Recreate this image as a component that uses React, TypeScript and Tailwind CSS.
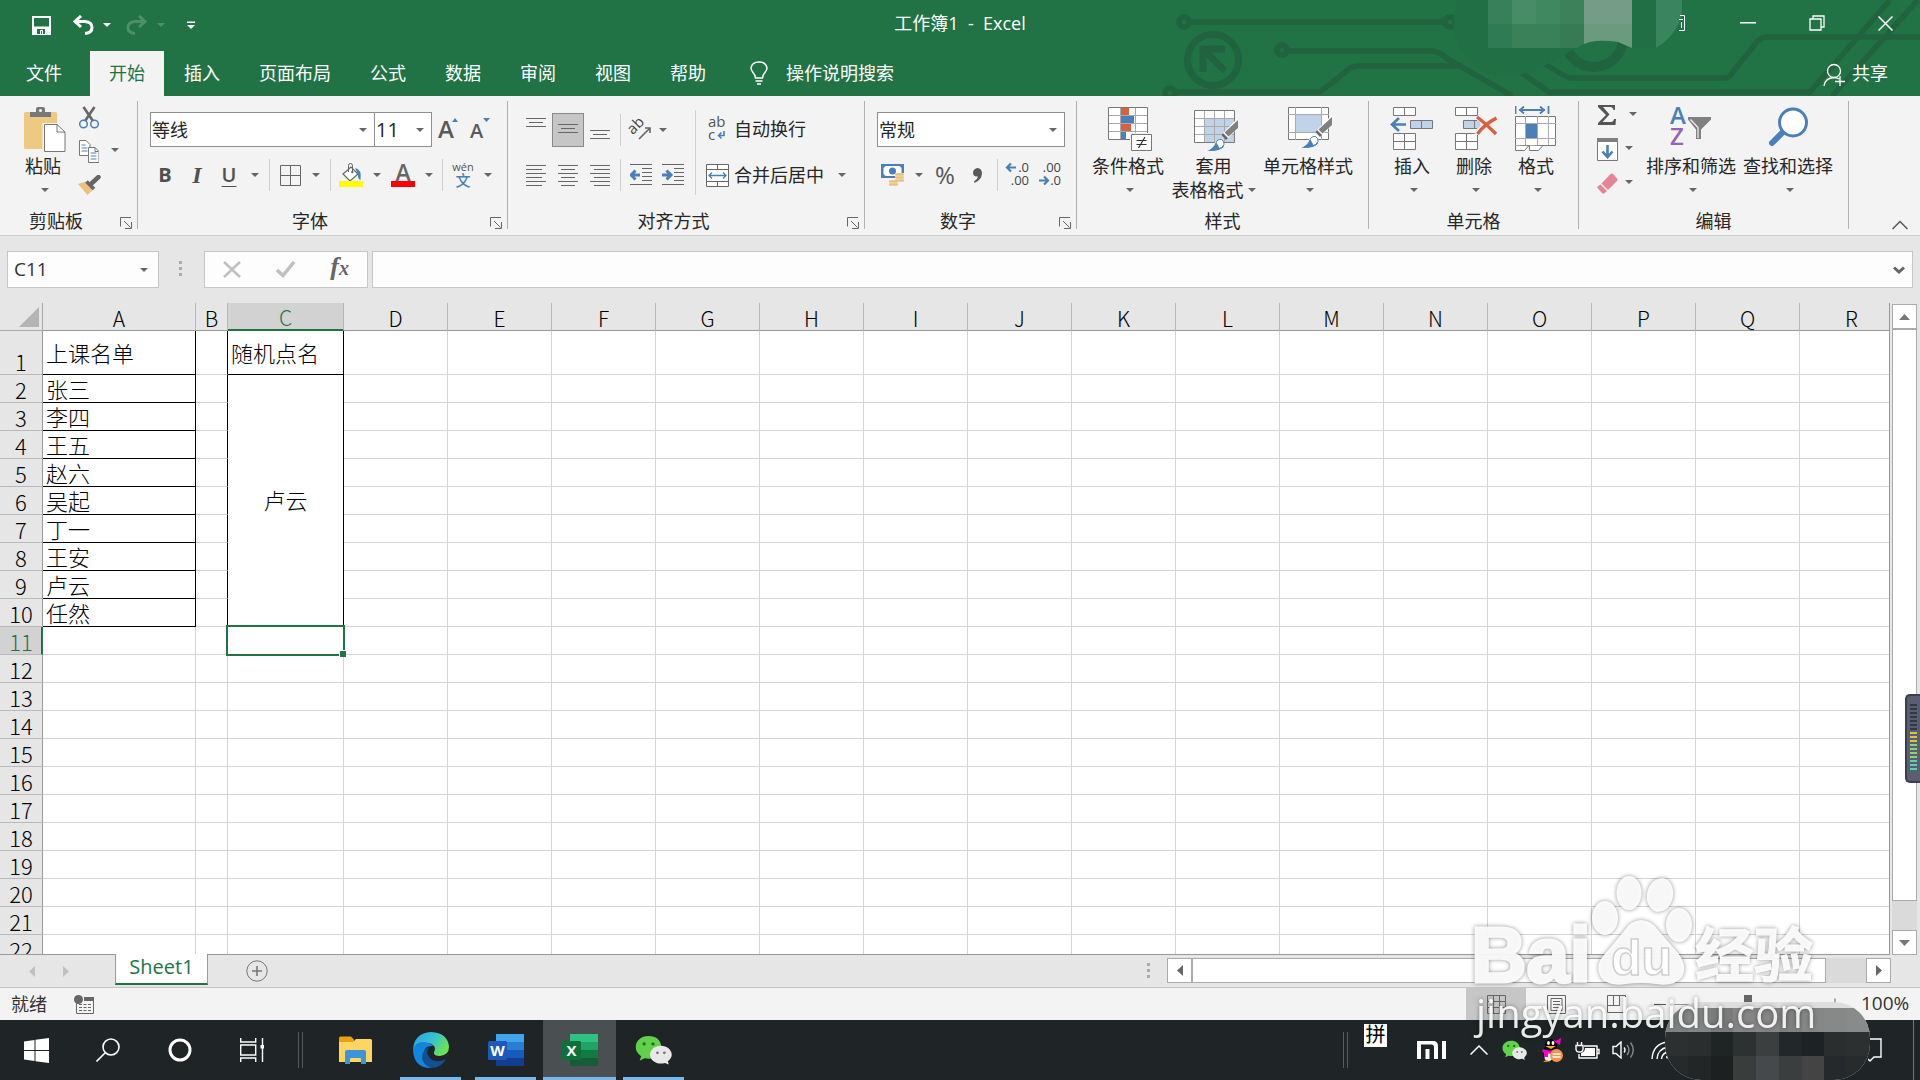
import type { ReactNode } from "react";

const names = ["张三", "李四", "王五", "赵六", "吴起", "丁一", "王安", "卢云", "任然"];
const columns = ["A", "B", "C", "D", "E", "F", "G", "H", "I", "J", "K", "L", "M", "N", "O", "P", "Q", "R"];
const restColumns = columns.slice(3);
const tabs = ["插入", "页面布局", "公式", "数据", "审阅", "视图", "帮助"];

/* ---------- small shared pieces ---------- */

function Caret({ className = "text-[#666]" }: { className?: string }) {
  return (
    <svg width="8" height="4" viewBox="0 0 8 4" className={className} aria-hidden="true">
      <path d="M0 0h8L4 4z" fill="currentColor" />
    </svg>
  );
}

function CaretButton({ label }: { label: string }) {
  return (
    <button aria-label={label} className="flex h-8 w-5 items-center justify-center">
      <Caret />
    </button>
  );
}

function IconButton({ label, active, children }: { label: string; active?: boolean; children: ReactNode }) {
  return (
    <button
      aria-label={label}
      className={
        active
          ? "flex h-[34px] w-8 items-center justify-center border border-[#8a8a8a] bg-[#c6c6c6]"
          : "flex h-[34px] w-8 items-center justify-center"
      }
    >
      {children}
    </button>
  );
}

function Separator({ className = "mx-1 h-8" }: { className?: string }) {
  return <span className={`w-px shrink-0 bg-[#d0d0d0] ${className}`} />;
}

function Group({ title, launcher, width, children }: { title: string; launcher?: boolean; width: string; children: ReactNode }) {
  return (
    <section aria-label={title} className={`flex shrink-0 ${width}`}>
      <div className="flex min-w-0 flex-1 flex-col">
        <div className="h-[113px]">{children}</div>
        <div className="flex h-6 items-center">
          <span className="flex-1 text-center leading-6">{title}</span>
          {launcher && (
            <button aria-label={`${title}设置`} className="mr-[5px] ml-2 pt-1">
              <svg width="12" height="12" viewBox="0 0 12 12" fill="none" stroke="#666">
                <path d="M.5 9.500V.5H11M4 4l6.500 6.500M11.500 5v6.500H5" />
              </svg>
            </button>
          )}
        </div>
      </div>
      <span className="mt-[5px] h-32 w-px bg-[#b1b1b1]" />
    </section>
  );
}

function BigButton({ icon, text, second, width }: { icon: ReactNode; text: string; second?: string; width: string }) {
  return (
    <button className={`flex flex-col items-center pt-[10px] ${width}`}>
      <span className="flex h-12 items-start justify-center">{icon}</span>
      <span className="leading-6 whitespace-nowrap">{text}</span>
      <span className="flex h-6 items-center gap-1 leading-6 whitespace-nowrap">
        {second}
        <Caret className={second ? "text-[#666]" : "ml-1 text-[#666]"} />
      </span>
    </button>
  );
}

function Combo({ label, value, width }: { label: string; value: string; width: string }) {
  return (
    <div className={`relative h-[35px] border border-[#8f8f8f] bg-white ${width}`}>
      <select aria-label={label} className="h-full w-full appearance-none bg-transparent pl-px outline-none">
        <option>{value}</option>
      </select>
      <span className="pointer-events-none absolute inset-y-0 right-[7px] flex items-center">
        <Caret />
      </span>
    </div>
  );
}

/* ---------- ribbon icons ---------- */

function Lines({ short, align }: { short: number; align: "left" | "center" | "right" }) {
  return (
    <svg width="20" height="23" viewBox="0 0 20 23" stroke="#666">
      {[20, short, 20, short, 20, short].map((w, i) => {
        const x = align === "left" ? 0 : align === "right" ? 20 - w : (20 - w) / 2;
        return <path key={i} d={`M${x} ${i * 4 + 1.5}h${w}`} />;
      })}
    </svg>
  );
}

function VerticalLines({ top }: { top: number }) {
  return (
    <svg width="20" height="34" viewBox="0 0 20 34" stroke="#666">
      <path d={`M0 ${top + 0.5}h20M3 ${top + 4.5}h14M0 ${top + 8.5}h20`} />
    </svg>
  );
}

function Indent({ right }: { right?: boolean }) {
  return (
    <svg width="22" height="22" viewBox="0 0 22 22">
      <path d="M0 .5h22M12 4.500h10M12 8.500h10M12 12.500h10M12 16.500h10M0 20.500h22" stroke="#666" />
      {right ? (
        <path d="M0 11h8M4.500 6.500L9 11l-4.500 4.500" fill="none" stroke="#4a7fb8" strokeWidth="3" />
      ) : (
        <path d="M10 11H2M5.500 6.500L1 11l4.500 4.500" fill="none" stroke="#4a7fb8" strokeWidth="3" />
      )}
    </svg>
  );
}

function PasteIcon() {
  return (
    <svg width="42" height="46" viewBox="0 0 42 46">
      <rect x="0" y="6" width="33" height="37" rx="1.500" fill="#eec981" />
      <path d="M6 11V6h6V3q0-2 2-2h5q2 0 2 2v3h6v5z" fill="#777" />
      <circle cx="16.500" cy="4.500" r="1.600" fill="#f3f3f3" />
      <path d="M18.500 17H34l8 8v21H18.500z" fill="#f3f3f3" />
      <path d="M20.500 18.500H33l8 7.500v19.500H20.500z" fill="#fff" stroke="#777" />
      <path d="M33 18.500V26h8" fill="none" stroke="#777" />
    </svg>
  );
}

function CutIcon() {
  return (
    <svg width="20" height="23" viewBox="0 0 20 23" fill="none">
      <path d="M4.500 1L14 15M15.500 1L6 15" stroke="#666" strokeWidth="2.600" />
      <circle cx="4.500" cy="18" r="3.800" stroke="#4a7fb8" strokeWidth="1.500" />
      <circle cx="15.500" cy="18" r="3.800" stroke="#4a7fb8" strokeWidth="1.500" />
    </svg>
  );
}

function CopyIcon() {
  return (
    <svg width="20" height="23" viewBox="0 0 20 23">
      <path d="M.5 .5H7l4 4v11H.5z" fill="#fff" stroke="#777" />
      <path d="M2.500 5h4M2.500 8h6M2.500 11h6" stroke="#4a7fb8" />
      <path d="M9.500 7.500H16l4 4v11H9.500z" fill="#fff" stroke="#777" />
      <path d="M16 7.500v4h3.500" fill="none" stroke="#777" />
      <path d="M11.500 13h6M11.500 16h6M11.500 19h6" stroke="#4a7fb8" />
    </svg>
  );
}

function PainterIcon() {
  return (
    <svg width="23" height="20" viewBox="0 0 23 20">
      <path d="M0 9l8-2.500 7.500 8L9.500 20z" fill="#eac27c" />
      <path d="M8.500 6.500l7.500 7.500" stroke="#666" strokeWidth="3.500" />
      <path d="M14 8l6.500-6" stroke="#666" strokeWidth="4.500" strokeLinecap="round" />
    </svg>
  );
}

function FontSizeIcon({ up }: { up?: boolean }) {
  return (
    <svg width="22" height="24" viewBox="0 0 22 24" className="overflow-visible">
      <text x="0" y="22" fontSize={up ? 24 : 20} fontWeight="600" fill="#595959">A</text>
      {up ? <path d="M14 6h6L17 2z" fill="#4a7fb8" /> : <path d="M13 2h7l-3.500 4z" fill="#4a7fb8" />}
    </svg>
  );
}

function BorderIcon() {
  return (
    <svg width="21" height="21" viewBox="0 0 21 21" fill="none" stroke="#666">
      <path d="M.5 .5h20v20H.5zM10.500 .5v20M.5 10.500h20" />
    </svg>
  );
}

function FillIcon() {
  return (
    <svg width="24" height="24" viewBox="0 0 24 24">
      <path d="M4 11l8-7 7 7-8 7z" fill="#fff" stroke="#666" strokeWidth="1.200" />
      <path d="M9.500 9V2.500q0-2 2-2t2 2V9" fill="none" stroke="#666" />
      <circle cx="13.300" cy="9" r="1.200" fill="#666" />
      <path d="M16 5q7 1 5.500 12-3-1-2.500-6z" fill="#4a7fb8" />
      <path d="M0 18h24v6H0z" fill="#ffff00" />
    </svg>
  );
}

function FontColorIcon() {
  return (
    <svg width="24" height="24" viewBox="0 0 24 24" className="overflow-visible">
      <text x="12" y="17.500" fontSize="23" fontWeight="600" textAnchor="middle" fill="#666">A</text>
      <path d="M0 18h24v6H0z" fill="#f00" />
    </svg>
  );
}

function PhoneticIcon() {
  return (
    <svg width="24" height="26" viewBox="0 0 24 26" className="overflow-visible">
      <text x="13" y="9" fontSize="11" textAnchor="middle" fill="#555">wén</text>
      <text x="13" y="24" fontSize="15" fontWeight="500" textAnchor="middle" fill="#4a7fb8">文</text>
    </svg>
  );
}

function OrientationIcon() {
  return (
    <svg width="22" height="22" viewBox="0 0 22 22" className="overflow-visible">
      <text x="1" y="12" fontSize="15" fill="#444" transform="rotate(-45 7 12)">ab</text>
      <path d="M9 20L20 9M15 9h5v5" fill="none" stroke="#666" strokeWidth="1.600" />
    </svg>
  );
}

function WrapIcon() {
  return (
    <svg width="21" height="26" viewBox="0 0 21 26" className="overflow-visible">
      <text x="2" y="11" fontSize="15" fill="#555">ab</text>
      <text x="2" y="24" fontSize="15" fill="#555">c</text>
      <path d="M18 15v4.500h-5M15.500 16.500l-3 3 3 3" fill="none" stroke="#4a7fb8" strokeWidth="1.600" />
    </svg>
  );
}

function MergeIcon() {
  return (
    <svg width="23" height="23" viewBox="0 0 23 23" fill="none">
      <path d="M.5 .5h22v22H.5z" fill="#fff" stroke="#666" />
      <path d="M0 5.500h23M0 17.500h23M11.500 1v4.500M11.500 17.500V22" stroke="#666" />
      <path d="M2.500 11.500h18M6 8.500l-3 3 3 3M17 8.500l3 3-3 3" stroke="#4a7fb8" strokeWidth="1.300" />
    </svg>
  );
}

function MoneyIcon() {
  return (
    <svg width="24" height="24" viewBox="0 0 24 24">
      <path d="M0 1h23v14H0z" fill="#4a7fb8" />
      <path d="M2.500 5l2-2h14l2 2v6l-2 2h-14l-2-2z" fill="#fff" />
      <circle cx="11.500" cy="8" r="3.500" fill="#4a7fb8" />
      <path d="M14 10h9v10h-5v4H8v-7h6z" fill="#f3f3f3" />
      <path d="M15 11.500h7M15 14.500h7M15 17.500h7M9 18.500h7M9 21.500h7" stroke="#e9c27e" strokeWidth="2.300" strokeLinecap="round" />
    </svg>
  );
}

function DecimalIcon({ decrease }: { decrease?: boolean }) {
  return (
    <svg width="24" height="26" viewBox="0 0 24 26" className="overflow-visible">
      <text x="23" y="10" fontSize="13" textAnchor="end" fill="#444">{decrease ? ".00" : ".0"}</text>
      <text x="23" y="23" fontSize="13" textAnchor="end" fill="#444">{decrease ? ".0" : ".00"}</text>
      {decrease ? (
        <path d="M1 18.500h8M6 14.500l4 4-4 4" fill="none" stroke="#4a7fb8" strokeWidth="2.200" />
      ) : (
        <path d="M10 5.500H2M5 1.500l-4 4 4 4" fill="none" stroke="#4a7fb8" strokeWidth="2.200" />
      )}
    </svg>
  );
}

function ConditionalIcon() {
  return (
    <svg width="44" height="46" viewBox="0 0 44 46">
      <path d="M.5 1.500h39v32H.5z" fill="#fff" />
      <path d="M0 9.500h40M0 17.500h40M0 25.500h40M12.500 1v33M27.500 1v33" stroke="#aaa" />
      <path d="M13 2h8v7h-8zM13 18h10v7H13z" fill="#d9613f" />
      <path d="M13 10h13v7H13zM13 26h5v8h-5z" fill="#4a7fb8" />
      <path d="M.5 1.500h39v32H.5z" fill="none" stroke="#777" />
      <path d="M22 27h22v19H22z" fill="#f3f3f3" />
      <path d="M23.500 28.500h20v16h-20z" fill="#fff" stroke="#777" />
      <path d="M28.500 34.500h10M28.500 38.500h10M37 31l-6.500 11" stroke="#333" strokeWidth="1.200" />
    </svg>
  );
}

function Brush() {
  return (
    <>
      <path d="M44 9v10L33 30l-5-5z" fill="#fff" />
      <path d="M44 11v8l-9.500 8.500-4-4z" fill="#808080" />
      <path d="M29 24l5 5-2 2-4.500-5z" fill="#666" />
      <path d="M11 42q8-2 10-8 4-5 8-1.500 4 5-2 8-5 3-16 1.500z" fill="#4a7fb8" stroke="#fff" />
      <path d="M22 34q1-4 5.500-3.500 3 1.500 2.500 5-2 4-5 4-1-3-3-5.500z" fill="#fff" stroke="#4a7fb8" />
    </>
  );
}

function TableStyleIcon() {
  return (
    <svg width="44" height="46" viewBox="0 0 44 46">
      <path d="M.5 4.500h40v32H.5z" fill="#fff" />
      <path d="M10.500 12.500h30v24h-30z" fill="#c0d3e9" />
      <path d="M0 12.500h41M0 20.500h41M0 28.500h41M10.500 4v33M20.500 4v33M30.500 4v33" stroke="#aaa" />
      <path d="M.5 4.500h40v32H.5z" fill="none" stroke="#777" />
      <g transform="translate(0 3)"><Brush /></g>
    </svg>
  );
}

function CellStyleIcon() {
  return (
    <svg width="44" height="46" viewBox="0 0 44 46">
      <path d="M.5 1.500h40v32H.5z" fill="#fff" stroke="#777" />
      <path d="M0 8.500h41M7.500 1v33M33.500 1v33M0 26.500h41" stroke="#aaa" />
      <path d="M8 9h25v17H8z" fill="#c0d3e9" />
      <Brush />
    </svg>
  );
}

function InsertCellsIcon() {
  return (
    <svg width="44" height="46" viewBox="0 0 44 46">
      <path d="M3.500 1.500h22v8h-22zM3.500 27.500h22v16h-22z" fill="#fff" stroke="#777" />
      <path d="M14.500 1.500v8M14.500 27.500v16M3.500 35.500h22" stroke="#777" />
      <path d="M20.500 14.500h22v8h-22z" fill="#c0d3e9" stroke="#777" />
      <path d="M31.500 14.500v8" stroke="#777" />
      <path d="M16 18.500H3M9 12l-7 6.500L9 25" fill="none" stroke="#4a7fb8" strokeWidth="2.600" />
    </svg>
  );
}

function DeleteCellsIcon() {
  return (
    <svg width="42" height="46" viewBox="0 0 42 46" className="ml-1">
      <path d="M.5 1.500h22v8H.5zM.5 27.500h22v16H.5z" fill="#fff" stroke="#777" />
      <path d="M11.500 1.500v8M11.500 27.500v16M.5 35.500h22" stroke="#777" />
      <path d="M8.500 14.500h17v8h-17z" fill="#c0d3e9" />
      <path d="M22 14.500H8.500v8H22M19.500 14.500v8" fill="none" stroke="#777" />
      <path d="M20 11l5-2 8 7 9-6-8 8 8 11-11-8-8 8-4-2 8-9z" fill="#f3f3f3" />
      <path d="M22 11q8 6 19 17M41.500 12q-12 6-19 16" fill="none" stroke="#d9613f" strokeWidth="3.400" />
    </svg>
  );
}

function FormatCellsIcon() {
  return (
    <svg width="42" height="46" viewBox="0 0 42 46">
      <path d="M.5 0v8M33.500 0v8M4 4h26M9 .5L5 4l4 3.500M25 .5L29 4l-4 3.500" fill="none" stroke="#4a7fb8" strokeWidth="1.800" />
      <path d="M.5 10.500h40v29H.5z" fill="#fff" stroke="#777" />
      <path d="M0 17.500h41M0 32.500h41M10.500 10v29M22.500 10v29M33.500 10v29" stroke="#aaa" />
      <path d="M11 18h11v14H11z" fill="#4a7fb8" />
      <path d="M.5 39.500v5h9l4-4.500M14.500 39.500v5h9l4-4.500" fill="#fff" stroke="#777" />
    </svg>
  );
}

function SigmaIcon() {
  return (
    <svg width="18" height="20" viewBox="0 0 18 20">
      <path d="M0 0h17v5h-1.500Q15 2 12 2H5l6.500 7.500L4.500 17H13q2.500 0 3-3H18l-.5 6H0v-2l8-8L0 2z" fill="#555" />
    </svg>
  );
}

function FillDownIcon() {
  return (
    <svg width="21" height="23" viewBox="0 0 21 23">
      <path d="M.5 .5h20v22H.5z" fill="#fff" stroke="#777" />
      <path d="M0 0h21v4H0z" fill="#808080" />
      <path d="M10.500 7v12M5.500 13.500l5 5.500 5-5.500" fill="none" stroke="#4a7fb8" strokeWidth="2.600" />
    </svg>
  );
}

function EraserIcon() {
  return (
    <svg width="21" height="21" viewBox="0 0 21 21">
      <path d="M4.500 10.500L13.500 1q1.500-1 3 .5l3.500 4q1 1.500 0 2.500L11 17z" fill="#e58597" />
      <path d="M3.500 11.500L10 18l-3 2.500q-1 .5-2-.5l-4.500-5q-.5-1 0-1.500z" fill="#e58597" />
    </svg>
  );
}

function SortIcon() {
  return (
    <svg width="44" height="46" viewBox="0 0 44 46" className="overflow-visible">
      <text x="1" y="18" fontSize="24" fontWeight="600" fill="#4a7fb8">A</text>
      <text x="1" y="39" fontSize="24" fontWeight="600" fill="#9663ba">Z</text>
      <path d="M19 11h23v2.500L32 23.500V33h-5v-9.500L19 13.500z" fill="#808080" />
      <path d="M21.500 13.500l7.500 8V32" fill="none" stroke="#f3f3f3" strokeWidth="1.200" />
    </svg>
  );
}

function FindIcon() {
  return (
    <svg width="42" height="46" viewBox="0 0 42 46">
      <path d="M5 37l12-12" stroke="#4a7fb8" strokeWidth="6" strokeLinecap="round" />
      <circle cx="26" cy="16.500" r="13.500" fill="#fff" stroke="#4a7fb8" strokeWidth="3" />
    </svg>
  );
}

/* ---------- title bar and tabs ---------- */

function CircuitArt() {
  return (
    <svg className="pointer-events-none absolute inset-y-0 right-0" width="850" height="96" viewBox="1070 0 850 96" fill="none" aria-hidden="true">
      <defs>
        <clipPath id="smudge">
          <path d="M1468 0h214q3 30-26 48h-24l-14-6q-25-4-38 4l-40 22q-30 14-56 4-42-28-26-72z" />
        </clipPath>
      </defs>
      <g stroke="#22633f" strokeWidth="5.500">
        <circle cx="1184" cy="22" r="5" />
        <path d="M1190 22h255M1288 51h142q10 0 16 7l66 38M1176 92h144l28-22q4-4 10-4h102" />
        <circle cx="1450" cy="22" r="5" />
        <circle cx="1282" cy="50" r="5" />
        <circle cx="1170" cy="93" r="5" />
        <path d="M1535 58l28 17q5 3 9 3h152q6 0 8-5l25-31q4-5 10-5h153M1513 67l36 25h261L1890 0M1832 96L1918 0" />
        <circle cx="1213" cy="60" r="25.500" strokeWidth="7" />
        <path d="M1203 72V49h22M1204 50l21 21" strokeWidth="7" />
        <circle cx="1594" cy="38" r="29" strokeWidth="10" />
      </g>
      <g clipPath="url(#smudge)">
        <path d="M1440 0h250v90h-250z" fill="#206f45" />
        <path d="M1488 0h24v24h-24z" fill="#37805a" />
        <path d="M1512 0h24v24h-24z" fill="#478c66" />
        <path d="M1536 0h24v24h-24z" fill="#3f8860" />
        <path d="M1560 0h24v24h-24z" fill="#3b8159" />
        <path d="M1488 24h24v24h-24z" fill="#2f7b54" />
        <path d="M1512 24h48v24h-48z" fill="#3a815a" />
        <path d="M1560 24h24v24h-24z" fill="#367b54" />
        <path d="M1584 0h48v24h-48z" fill="#749c86" />
        <path d="M1584 24h48v24h-48z" fill="#6b9a7f" />
        <path d="M1656 0h26v48h-26z" fill="#3a8560" />
      </g>
    </svg>
  );
}

function TitleBar() {
  return (
    <header className="relative h-24 shrink-0 bg-[#217346] text-white">
      <CircuitArt />
      <div className="relative grid h-[51px] grid-cols-3 items-start">
        <div className="flex items-center pt-2 pl-[25px]">
          <IconButton label="保存">
            <svg width="19" height="19" viewBox="0 0 19 19" fill="none">
              <path d="M1 1h17v17H1zM2 11.500h15" stroke="#fff" strokeWidth="2" />
              <path d="M2 12h15v6H2z" fill="#fff" />
              <path d="M5 13h8v5H5z" fill="#217346" />
              <path d="M8 14h3v5H8z" fill="#fff" />
              <path d="M9 15h1v3H9z" fill="#217346" />
            </svg>
          </IconButton>
          <span className="ml-[10px]">
            <IconButton label="撤消">
              <svg width="22" height="20" viewBox="0 0 22 20" fill="none" stroke="#fff" strokeWidth="3">
                <path d="M9 1L3 6.500 9 12M3 6.500h10q7 .5 7 6t-7 6" />
              </svg>
            </IconButton>
          </span>
          <button aria-label="撤消列表" className="flex h-8 w-4 items-center justify-center"><Caret className="text-white" /></button>
          <span className="ml-[6px]">
            <IconButton label="恢复">
              <svg width="22" height="20" viewBox="0 0 22 20" fill="none" stroke="#4d8f6b" strokeWidth="3">
                <path d="M13 1l6 5.500-6 5.500M19 6.500H9q-7 .5-7 6t7 6" />
              </svg>
            </IconButton>
          </span>
          <button aria-label="恢复列表" className="flex h-8 w-4 items-center justify-center"><Caret className="text-[#4d8f6b]" /></button>
          <button aria-label="自定义快速访问工具栏" className="ml-[10px] flex h-8 w-6 items-center justify-center">
            <svg width="8" height="8" viewBox="0 0 8 8"><path d="M0 .5h8v1.500H0zM0 4h8L4 8z" fill="#fff" /></svg>
          </button>
        </div>
        <h1 className="pt-[11px] text-center leading-6 whitespace-pre">工作簿1  -  Excel</h1>
        <div className="flex justify-end">
          <button aria-label="功能区显示选项" className="flex h-[46px] w-[69px] items-center justify-end pr-7">
            <svg width="6" height="16" viewBox="0 0 6 16" fill="none" stroke="#fff"><path d="M1 .5h4.500v15H0M0 4.500h4M2.500 7v6" /></svg>
          </button>
          <button aria-label="最小化" className="flex h-[46px] w-[69px] items-center justify-center">
            <svg width="16" height="2" viewBox="0 0 16 2"><path d="M0 0h16v1.500H0z" fill="#fff" /></svg>
          </button>
          <button aria-label="还原" className="flex h-[46px] w-[69px] items-center justify-center">
            <svg width="16" height="16" viewBox="0 0 16 16" fill="none" stroke="#fff" strokeWidth="1.300"><path d="M1 4h11v11H1zM4 4V1h11v11h-3" /></svg>
          </button>
          <button aria-label="关闭" className="flex h-[46px] w-[69px] items-center justify-center">
            <svg width="15" height="15" viewBox="0 0 15 15" fill="none" stroke="#fff" strokeWidth="1.500"><path d="M.5 .5l14 14M14.500 .5l-14 14" /></svg>
          </button>
        </div>
      </div>
      <nav className="relative flex h-[45px] items-stretch">
        <button className="pr-7 pb-[2px] pl-[26px]">文件</button>
        <button className="mr-px bg-[#f3f3f3] px-[19px] pb-[2px] text-[#217346]">开始</button>
        {tabs.map((tab) => (
          <button key={tab} className="mr-px px-[19px] pb-[2px]">{tab}</button>
        ))}
        <button className="ml-6 flex items-center gap-[18px] pb-[2px]">
          <svg width="18" height="24" viewBox="0 0 18 24" fill="none" stroke="#fff" strokeWidth="1.500">
            <path d="M5.500 17q0-3-2.500-5.500Q1 9 1 7q1-6 8-6t8 6q0 2-2 4.500-2.500 2.500-2.500 5.500zM5.500 20h7M7 23h4" />
          </svg>
          操作说明搜索
        </button>
        <button className="mr-8 ml-auto flex items-center gap-[6px] pb-[2px]">
          <svg width="23" height="24" viewBox="0 0 23 24" fill="none" stroke="#fff" strokeWidth="1.300" className="mt-1">
            <circle cx="11" cy="8" r="6.500" />
            <path d="M1 23q1-8 10-8.500 3 0 5 1.500M17 13v10M12 18.500h10" />
          </svg>
          共享
        </button>
      </nav>
    </header>
  );
}

function Ribbon() {
  return (
    <div className="flex h-[140px] shrink-0 border-b border-[#d0d0d0] bg-[#f3f3f3]">
      <Group title="剪贴板" launcher width="w-[138px]">
        <div className="flex">
          <div className="ml-[19px]">
            <BigButton icon={<span className="ml-1"><PasteIcon /></span>} text="粘贴" width="w-12" />
          </div>
          <div className="ml-[6px] pt-1">
            <IconButton label="剪切"><CutIcon /></IconButton>
            <div className="flex">
              <IconButton label="复制"><CopyIcon /></IconButton>
              <CaretButton label="复制选项" />
            </div>
            <IconButton label="格式刷"><PainterIcon /></IconButton>
          </div>
        </div>
      </Group>

      <Group title="字体" launcher width="w-[370px]">
        <div className="flex items-start pt-4 pl-3">
          <Combo label="字体" value="等线" width="w-[225px]" />
          <div className="-ml-px text-xl"><Combo label="字号" value="11" width="w-[58px]" /></div>
          <button aria-label="增大字号" className="ml-[6px] pt-1"><FontSizeIcon up /></button>
          <button aria-label="减小字号" className="ml-[10px] pt-1"><FontSizeIcon /></button>
        </div>
        <div className="flex items-center pt-[11px] pl-[11px] text-[#505050]">
          <IconButton label="加粗"><b className="text-xl">B</b></IconButton>
          <IconButton label="倾斜"><i className="font-['Liberation_Serif',serif] text-2xl font-bold">I</i></IconButton>
          <IconButton label="下划线"><span className="text-xl font-semibold underline decoration-1 underline-offset-4">U</span></IconButton>
          <CaretButton label="下划线选项" />
          <Separator />
          <IconButton label="边框"><BorderIcon /></IconButton>
          <CaretButton label="边框选项" />
          <Separator />
          <IconButton label="填充颜色"><FillIcon /></IconButton>
          <CaretButton label="填充颜色选项" />
          <IconButton label="字体颜色"><FontColorIcon /></IconButton>
          <CaretButton label="字体颜色选项" />
          <Separator className="mx-[3px] h-8" />
          <IconButton label="拼音"><PhoneticIcon /></IconButton>
          <CaretButton label="拼音选项" />
        </div>
      </Group>

      <Group title="对齐方式" launcher width="w-[357px]">
        <div className="flex">
          <div className="pt-[17px] pl-3">
            <div className="flex items-center">
              <IconButton label="顶端对齐"><VerticalLines top={5} /></IconButton>
              <IconButton label="垂直居中" active><VerticalLines top={11} /></IconButton>
              <IconButton label="底端对齐"><VerticalLines top={17} /></IconButton>
              <Separator />
              <IconButton label="方向"><OrientationIcon /></IconButton>
              <span className="-ml-1"><CaretButton label="方向选项" /></span>
            </div>
            <div className="flex items-center pt-[11px]">
              <IconButton label="左对齐"><Lines align="left" short={16} /></IconButton>
              <IconButton label="居中"><Lines align="center" short={14} /></IconButton>
              <IconButton label="右对齐"><Lines align="right" short={16} /></IconButton>
              <Separator />
              <IconButton label="减少缩进量"><Indent /></IconButton>
              <IconButton label="增加缩进量"><Indent right /></IconButton>
            </div>
          </div>
          <Separator className="mt-[14px] ml-[6px] h-[85px]" />
          <div className="pt-4 pl-[10px]">
            <button className="flex h-[34px] items-center gap-[7px]"><WrapIcon />自动换行</button>
            <div className="flex items-center pt-3">
              <button className="flex h-[34px] items-center gap-[5px]"><MergeIcon />合并后居中</button>
              <span className="ml-2"><CaretButton label="合并选项" /></span>
            </div>
          </div>
        </div>
      </Group>

      <Group title="数字" launcher width="w-[212px]">
        <div className="pt-4 pl-3">
          <Combo label="数字格式" value="常规" width="w-[188px]" />
          <div className="flex items-center pt-[11px]">
            <IconButton label="会计数字格式"><MoneyIcon /></IconButton>
            <CaretButton label="会计数字格式选项" />
            <IconButton label="百分比样式"><span className="text-2xl text-[#555]">%</span></IconButton>
            <IconButton label="千位分隔样式">
              <svg width="9" height="15" viewBox="0 0 9 15"><path d="M4.500 0Q9 .5 9 5.500 8.500 12 1.500 15l-.5-1.500Q4.500 11.500 5 8.500 0 9 0 4.500 .5 .5 4.500 0z" fill="#595959" /></svg>
            </IconButton>
            <Separator />
            <IconButton label="增加小数位数"><DecimalIcon /></IconButton>
            <IconButton label="减少小数位数"><DecimalIcon decrease /></IconButton>
          </div>
        </div>
      </Group>

      <Group title="样式" width="w-[292px]">
        <div className="flex gap-[6px] pl-[15px]">
          <BigButton icon={<span className="ml-1"><ConditionalIcon /></span>} text="条件格式" width="w-[72px]" />
          <BigButton icon={<span className="ml-1"><TableStyleIcon /></span>} text="套用" second="表格格式" width="w-[87px]" />
          <BigButton icon={<span className="ml-1"><CellStyleIcon /></span>} text="单元格样式" width="w-[90px]" />
        </div>
      </Group>

      <Group title="单元格" width="w-[210px]">
        <div className="flex pl-3">
          <BigButton icon={<InsertCellsIcon />} text="插入" width="w-[62px]" />
          <BigButton icon={<DeleteCellsIcon />} text="删除" width="w-[62px]" />
          <BigButton icon={<FormatCellsIcon />} text="格式" width="w-[62px]" />
        </div>
      </Group>

      <Group title="编辑" width="w-[270px]">
        <div className="flex">
          <div className="pt-[2px] pl-3">
            <div className="flex"><IconButton label="自动求和"><SigmaIcon /></IconButton><CaretButton label="求和选项" /></div>
            <div className="flex"><IconButton label="填充"><FillDownIcon /></IconButton><span className="-ml-1"><CaretButton label="填充选项" /></span></div>
            <div className="flex"><IconButton label="清除"><EraserIcon /></IconButton><span className="-ml-1"><CaretButton label="清除选项" /></span></div>
          </div>
          <div className="flex gap-[7px] pl-[3px]">
            <BigButton icon={<SortIcon />} text="排序和筛选" width="w-[90px]" />
            <BigButton icon={<FindIcon />} text="查找和选择" width="w-[90px]" />
          </div>
        </div>
      </Group>

      <button aria-label="折叠功能区" className="mr-3 mb-[5px] ml-auto self-end">
        <svg width="16" height="10" viewBox="0 0 16 10" fill="none" stroke="#555" strokeWidth="1.500"><path d="M.5 9L8 1.500 15.500 9" /></svg>
      </button>
    </div>
  );
}

function FormulaBar() {
  return (
    <div className="flex h-[67px] shrink-0 items-start px-[7px] pt-[15px]">
      <div className="flex h-[37px] w-[152px] items-center border border-[#c6c6c6] bg-[#fdfdfd]">
        <input aria-label="名称框" defaultValue="C11" className="w-full min-w-0 bg-transparent pl-[6px] text-[19px] text-[#333] outline-none" />
        <span className="mr-[10px]"><Caret /></span>
      </div>
      <span className="mt-[10px] ml-5 flex w-[3px] flex-col gap-[3px]">
        <i className="h-[3px] bg-[#aaa]" />
        <i className="h-[3px] bg-[#aaa]" />
        <i className="h-[3px] bg-[#aaa]" />
      </span>
      <div className="ml-[22px] flex h-[37px] w-[164px] items-center justify-between border border-[#c6c6c6] bg-[#fdfdfd] px-[18px]">
        <button aria-label="取消">
          <svg width="18" height="17" viewBox="0 0 18 17" stroke="#c0c0c0" strokeWidth="2.500"><path d="M1 1l16 15M17 1L1 16" /></svg>
        </button>
        <button aria-label="输入">
          <svg width="20" height="17" viewBox="0 0 20 17" fill="none" stroke="#c0c0c0" strokeWidth="3.500"><path d="M1 9l6 5.500L18 1" /></svg>
        </button>
        <button aria-label="插入函数" className="pb-1 font-['Liberation_Serif',serif] text-[26px] leading-6 font-bold text-[#666] italic">
          f<span className="text-xl">x</span>
        </button>
      </div>
      <div className="ml-1 flex h-[37px] flex-1 items-center border border-[#c6c6c6] bg-[#fdfdfd] pr-[7px]">
        <input aria-label="编辑栏" className="h-full min-w-0 flex-1 bg-transparent px-2 outline-none" />
        <button aria-label="展开编辑栏">
          <svg width="12" height="8" viewBox="0 0 12 8" fill="none" stroke="#666" strokeWidth="3"><path d="M1 1.500l5 4.500 5-4.500" /></svg>
        </button>
      </div>
    </div>
  );
}

/* ---------- sheet ---------- */

function Sheet() {
  return (
    <div className="flex min-h-0 flex-1">
      <div className="min-w-0 flex-1 overflow-hidden border-r border-b border-[#999] bg-white">
        <table className="w-full min-w-[1904px] table-fixed border-separate border-spacing-0 font-['Noto_Sans_CJK_SC',sans-serif] text-[22px] leading-6 font-light text-black">
          <colgroup>
            <col className="w-[43px]" />
            <col className="w-[153px]" />
            <col className="w-8" />
            <col className="w-[116px]" />
            {restColumns.map((c) => <col key={c} className="w-[104px]" />)}
          </colgroup>
          <thead>
            <tr>
              <th className="h-7 border-r border-b border-[#aaa] bg-[#e6e6e6] p-0">
                <svg className="mr-[3px] ml-auto" width="20" height="20" viewBox="0 0 20 20"><path d="M20 0v20H0z" fill="#b4b4b4" /></svg>
              </th>
              {columns.map((c) => (
                <th
                  key={c}
                  scope="col"
                  className={
                    c === "C"
                      ? "h-7 border-r border-b-2 border-r-[#b4b4b4] border-b-[#217346] bg-[#d2d2d2] p-0 pt-[2px] text-[21px] font-light text-[#217346]"
                      : "h-7 border-r border-b border-r-[#b9b9b9] border-b-[#999] bg-[#e6e6e6] p-0 pt-[2px] text-[21px] font-light"
                  }
                >
                  {c}
                </th>
              ))}
            </tr>
          </thead>
          <tbody>
            {Array.from({ length: 22 }, (_, i) => i + 1).map((row) => {
              const boxed = row <= 10;
              return (
                <tr key={row}>
                  <th
                    scope="row"
                    className={
                      row === 11
                        ? "h-7 border-r-2 border-b border-r-[#217346] border-b-[#b9b9b9] bg-[#d2d2d2] p-0 pl-px align-bottom leading-[26px] font-light text-[#217346]"
                        : "h-7 border-r border-b border-r-[#999] border-b-[#b9b9b9] bg-[#e6e6e6] p-0 align-bottom leading-[26px] font-light"
                    }
                  >
                    {row}
                  </th>
                  <td className={`border-r border-b pt-0 pr-0 pb-[2px] pl-[3px] ${row === 1 ? "h-11" : "h-7"} ${boxed ? "border-black" : "border-[#d4d4d4]"}`}>
                    {row === 1 ? "上课名单" : names[row - 2]}
                  </td>
                  <td className={`border-r border-b border-b-[#d4d4d4] p-0 ${boxed ? "border-r-black" : "border-r-[#d4d4d4]"}`} />
                  {row === 1 && <td className="border-r border-b border-black pt-0 pr-0 pb-[2px] pl-[3px]">随机点名</td>}
                  {row === 2 && <td rowSpan={9} className="border-r border-b border-black p-0 pb-1 text-center">卢云</td>}
                  {row === 11 && (
                    <td className="relative border-r border-b border-[#d4d4d4] p-0">
                      <span className="absolute -inset-[2px] border-2 border-[#217346]" />
                      <span className="absolute -right-[3px] -bottom-[3px] size-[7px] border-t border-l border-white bg-[#217346]" />
                    </td>
                  )}
                  {row > 11 && <td className="border-r border-b border-[#d4d4d4] p-0" />}
                  {restColumns.map((c) => <td key={c} className="border-r border-b border-[#d4d4d4] p-0" />)}
                </tr>
              );
            })}
          </tbody>
        </table>
      </div>
      <div className="flex w-[30px] flex-col bg-[#e6e6e6] pt-px pr-[3px] pl-[2px]">
        <button aria-label="向上滚动" className="flex h-[25px] items-center justify-center border border-[#ababab] bg-white">
          <svg width="11" height="6" viewBox="0 0 11 6"><path d="M0 6h11L5.500 0z" fill="#777" /></svg>
        </button>
        <div className="flex flex-1 flex-col bg-[#dadada] pb-[29px]">
          <span className="flex-1 border border-[#ababab] bg-white" />
        </div>
        <button aria-label="向下滚动" className="flex h-[25px] items-center justify-center border border-[#ababab] bg-white">
          <svg width="11" height="6" viewBox="0 0 11 6"><path d="M0 0h11L5.500 6z" fill="#777" /></svg>
        </button>
      </div>
    </div>
  );
}

function SheetTabs() {
  return (
    <div className="flex h-[33px] shrink-0 items-start border-b border-[#c6c6c6]">
      <button aria-label="上一个工作表" className="ml-[29px] flex h-8 w-[6px] items-center"><svg width="6" height="11" viewBox="0 0 6 11"><path d="M6 0v11L0 5.500z" fill="#c0c0c0" /></svg></button>
      <button aria-label="下一个工作表" className="ml-7 flex h-8 w-[6px] items-center"><svg width="6" height="11" viewBox="0 0 6 11"><path d="M0 0v11l6-5.500z" fill="#c0c0c0" /></svg></button>
      <button className="-mt-px ml-[46px] h-[31px] w-[93px] border-r border-b-2 border-l border-r-[#999] border-b-[#217346] border-l-[#999] bg-white pb-1 text-xl leading-6 font-medium text-[#217346]">
        Sheet1
      </button>
      <button aria-label="新工作表" className="ml-[38px] flex h-8 items-center">
        <svg width="22" height="22" viewBox="0 0 22 22" fill="none" stroke="#777"><circle cx="11" cy="11" r="10.200" /><path d="M11 6v10M6 11h10" strokeWidth="1.600" /></svg>
      </button>
      <span className="mt-2 ml-auto flex w-[3px] flex-col gap-[3px]">
        <i className="h-[3px] bg-[#aaa]" />
        <i className="h-[3px] bg-[#aaa]" />
        <i className="h-[3px] bg-[#aaa]" />
      </span>
      <div className="mt-[3px] mr-[29px] ml-[17px] flex h-[25px] w-[724px] bg-[#dadada]">
        <button aria-label="向左滚动" className="flex w-[25px] items-center justify-center border border-[#ababab] bg-white"><svg width="6" height="11" viewBox="0 0 6 11"><path d="M6 0v11L0 5.500z" fill="#666" /></svg></button>
        <span className="mr-10 flex-1 border border-[#ababab] bg-white" />
        <button aria-label="向右滚动" className="flex w-[25px] items-center justify-center border border-[#ababab] bg-white"><svg width="6" height="11" viewBox="0 0 6 11"><path d="M0 0v11l6-5.500z" fill="#666" /></svg></button>
      </div>
    </div>
  );
}

function StatusBar() {
  return (
    <div className="flex h-8 shrink-0 items-center bg-[#f3f3f3] pr-[11px] pl-[11px] text-[#333]">
      <span>就绪</span>
      <button aria-label="录制宏" className="ml-[27px]">
        <svg width="20" height="19" viewBox="0 0 20 19" fill="none">
          <path d="M2.500 8v10.500h17V5" stroke="#666" />
          <path d="M10 2h10v4H10z" fill="#666" />
          <circle cx="4.500" cy="4.500" r="4.500" fill="#666" />
          <path d="M5 9.500h13M5 12.500h13M5 15.500h13" stroke="#666" strokeDasharray="3 1.500" />
        </svg>
      </button>
      <button aria-label="普通" className="ml-auto flex h-8 w-[60px] items-center justify-center bg-[#c6c6c6]">
        <svg width="19" height="19" viewBox="0 0 19 19" fill="none" stroke="#666"><path d="M.5 .5h18v18H.5zM6.500 .5v18M12.500 .5v18M.5 6.500h18M.5 12.500h18" /></svg>
      </button>
      <button aria-label="页面布局" className="flex h-8 w-[60px] items-center justify-center">
        <svg width="19" height="19" viewBox="0 0 19 19" fill="none" stroke="#666"><path d="M.5 .5h18v18H.5zM4 3.500h11v12H4zM6 6.500h7M6 9.500h7M6 12.500h7" /></svg>
      </button>
      <button aria-label="分页预览" className="flex h-8 w-[60px] items-center justify-center">
        <svg width="19" height="18" viewBox="0 0 19 18" fill="none" stroke="#666"><path d="M.5 17.500V.5h18v17zM6.500 .5v10M12.500 .5v10M1 10.500h12" /></svg>
      </button>
      <button aria-label="缩小" className="ml-2 flex h-8 w-3 items-center"><span className="h-px w-3 bg-[#555]" /></button>
      <input
        type="range"
        aria-label="缩放"
        className="ml-2 h-5 w-[148px] appearance-none bg-[linear-gradient(#999,#999)] bg-[length:100%_1px] bg-center bg-no-repeat [&::-webkit-slider-thumb]:h-[19px] [&::-webkit-slider-thumb]:w-2 [&::-webkit-slider-thumb]:appearance-none [&::-webkit-slider-thumb]:bg-[#666]"
      />
      <button aria-label="放大" className="ml-[7px] flex h-8 w-3 items-center">
        <svg width="13" height="13" viewBox="0 0 13 13" stroke="#555"><path d="M6.500 0v13M0 6.500h13" /></svg>
      </button>
      <span className="ml-5 w-12 text-right text-[19px]">100%</span>
    </div>
  );
}

/* ---------- taskbar ---------- */

function TaskButton({ label, state, children }: { label: string; state?: "open" | "active"; children: ReactNode }) {
  return (
    <button
      aria-label={label}
      className={
        state === "active"
          ? "flex h-full w-[73px] items-center justify-center border-b-3 border-[#76b9ed] bg-[#4a5051] pt-[3px]"
          : state === "open"
            ? "mx-[7px] flex h-full w-[61px] items-center justify-center border-b-3 border-[#76b9ed] pt-[3px]"
            : "flex h-full w-[72px] items-center justify-center"
      }
    >
      {children}
    </button>
  );
}

function OfficeIcon({ letter, bands, badge }: { letter: string; bands: string[]; badge: string }) {
  return (
    <svg width="36" height="34" viewBox="0 0 36 34">
      {bands.map((color, i) => <path key={color} d={`M8 ${1 + i * 8}h28v8H8z`} fill={color} />)}
      <rect x="0" y="8" width="19" height="19" rx="1.500" fill={badge} />
      <text x="9.500" y="22.500" fontSize="15" fontWeight="700" textAnchor="middle" fill="#fff">{letter}</text>
    </svg>
  );
}

function WeChatIcon({ size }: { size: number }) {
  return (
    <svg width={size} height={size * 0.8} viewBox="0 0 37 30">
      <path d="M13.500 1C6 1 .5 6 .5 12q0 6 5.500 9.500L4.500 26l5-2.500q7 1.500 12-1.500 5-4 5-10C26 5 21 1 13.500 1z" fill="#5fd24a" />
      <circle cx="9" cy="9" r="1.700" fill="#2a6b22" />
      <circle cx="18" cy="9" r="1.700" fill="#2a6b22" />
      <path d="M26 11c-6 0-11 4-11 9s5 9 11 9q2 0 4-.7l4 1.700-1-3.500q4-3 4-6.500c0-5-5-9-11-9z" fill="#e8e8e8" />
      <circle cx="22.500" cy="18" r="1.400" fill="#777" />
      <circle cx="29.500" cy="18" r="1.400" fill="#777" />
    </svg>
  );
}

function Taskbar() {
  return (
    <footer className="flex h-[60px] shrink-0 items-center bg-[#1f2526] text-white">
      <TaskButton label="开始">
        <svg width="25" height="25" viewBox="0 0 25 25" fill="#fff"><path d="M0 3.500L10.500 2v10H0zM11.500 1.800L25 0v12H11.500zM0 13h10.500v10L0 21.500zM11.500 13H25v12l-13.500-1.800z" /></svg>
      </TaskButton>
      <TaskButton label="搜索">
        <svg width="24" height="24" viewBox="0 0 24 24" fill="none" stroke="#fff" strokeWidth="1.600"><circle cx="15" cy="9" r="8" /><path d="M9.500 14.500L.5 23.500" /></svg>
      </TaskButton>
      <TaskButton label="Cortana">
        <svg width="24" height="24" viewBox="0 0 24 24" fill="none" stroke="#fff" strokeWidth="3"><circle cx="12" cy="12" r="10" /></svg>
      </TaskButton>
      <TaskButton label="任务视图">
        <svg width="24" height="24" viewBox="0 0 24 24" fill="none" stroke="#fff" strokeWidth="1.400"><path d="M.7 0v4h15V0M.7 24v-4h15v4M.7 7h15v10H.7zM22.500 0v24" /><path d="M20.500 7h3.500v3.500h-3.500z" fill="#fff" stroke="none" /></svg>
      </TaskButton>
      <span className="mr-2 ml-[10px] h-9 w-[5px] border-x border-[#555b5c]" />
      <span className="h-full pl-2">
        <TaskButton label="文件资源管理器">
          <svg width="33" height="28" viewBox="0 0 33 28">
            <path d="M0 2q0-1.500 1.500-1.500H12l3 3v4H0z" fill="#e8a20c" />
            <path d="M0 6h14l3-3h14.500Q33 3 33 4.500V26H0z" fill="#ffd461" />
            <path d="M6 28V16q0-2 2-2h17q2 0 2 2v12h-5v-5q0-1-1-1h-9q-1 0-1 1v5z" fill="#3a95dc" />
          </svg>
        </TaskButton>
      </span>
      <span className="ml-[2px] h-full">
        <TaskButton label="Edge" state="open">
          <svg width="36" height="36" viewBox="0 0 36 36">
            <defs>
              <linearGradient id="edgeTop" x1="0" y1="0" x2="1" y2="0.500"><stop offset="0" stopColor="#2b9fe0" /><stop offset=".55" stopColor="#35c1d6" /><stop offset="1" stopColor="#69e352" /></linearGradient>
            </defs>
            <path d="M0 18Q1 1 18 0q17 1 18 15 0 8-9 9-7 0-6-4 2-3 0-6-4-5-11-2-9 3-10 6z" fill="url(#edgeTop)" />
            <path d="M0 18q2-8 10-8 7 0 10 4-8-1-9 6 0 10 10 14-3 2-5 2Q1 35 0 18z" fill="#1286dd" />
            <path d="M16 15q-4 6 1 11 6 6 16 1-5 9-15 9-8-3-9-10 0-8 7-11z" fill="#124f93" />
          </svg>
        </TaskButton>
      </span>
      <TaskButton label="Word" state="open">
        <OfficeIcon letter="W" bands={["#41a5ee", "#2b7cd3", "#185abd", "#103f91"]} badge="#1d59b8" />
      </TaskButton>
      <TaskButton label="Excel" state="active">
        <OfficeIcon letter="X" bands={["#2fc383", "#21a366", "#107c41", "#185c37"]} badge="#0f7039" />
      </TaskButton>
      <TaskButton label="微信" state="open"><WeChatIcon size={37} /></TaskButton>

      <span className="ml-auto h-9 w-[5px] border-x border-[#555b5c]" />
      <button className="mb-[30px] ml-4 size-[23px] bg-white text-xl leading-[22px] text-black">拼</button>
      <button aria-label="小米" className="ml-[30px]">
        <svg width="29" height="18" viewBox="0 0 29 18" fill="#fff"><path d="M0 0h16q5 0 5 5v13h-4V6q0-2.500-2.500-2.500H4V18H0zM8.500 8h4v10h-4zM25 0h4v18h-4z" /></svg>
      </button>
      <button aria-label="显示隐藏的图标" className="ml-6">
        <svg width="18" height="10" viewBox="0 0 18 10" fill="none" stroke="#fff" strokeWidth="1.500"><path d="M.5 9.500L9 1l8.500 8.500" /></svg>
      </button>
      <button aria-label="微信通知" className="ml-[14px]"><WeChatIcon size={25} /></button>
      <button aria-label="QQ" className="ml-[14px]">
        <svg width="22" height="25" viewBox="0 0 22 25">
          <ellipse cx="9" cy="15" rx="7.500" ry="8.500" fill="#000" />
          <circle cx="10" cy="7" r="6" fill="#000" />
          <ellipse cx="7.500" cy="19" rx="4" ry="4" fill="#fff" />
          <ellipse cx="7.500" cy="5" rx="1.400" ry="2" fill="#fff" />
          <ellipse cx="12" cy="5" rx="1.400" ry="2" fill="#fff" />
          <path d="M4 8h11l-5 3zM2 24q3-3 7-.5z" fill="#f8a51c" />
          <path d="M2 11q7 3 13 0l1 3q-7 3-15 0zM3 13h4v6H3zM12 1l3 2 5-3-1 7-5-3z" fill="#f0c" />
          <circle cx="15.500" cy="17.500" r="6.500" fill="#f7934a" />
          <path d="M11.500 16h8M11.500 19h8" stroke="#fff" strokeWidth="1.400" />
        </svg>
      </button>
      <button aria-label="电池" className="ml-3">
        <svg width="25" height="17" viewBox="0 0 25 17" fill="none" stroke="#fff" strokeWidth="1.400"><path d="M9 4h13v12H4v-4M22 7.500h2v4h-2M2.500 0v3M6.500 0v3M1 3.500h7V7q0 3-3.500 3T1 7z" /><path d="M10 6h10v8H6v-3q4-1 4-5z" fill="#fff" stroke="none" /></svg>
      </button>
      <button aria-label="音量" className="ml-3">
        <svg width="23" height="18" viewBox="0 0 23 18" fill="none" stroke="#fff" strokeWidth="1.400"><path d="M1 5.500h3l5-4.500v16l-5-4.500H1zM12 6.500q2 2.500 0 5" /><path d="M15 4q4 5 0 10M18.500 1.500q5.500 7.500 0 15" stroke="#888" /></svg>
      </button>
      <button aria-label="网络" className="ml-4">
        <svg width="19" height="18" viewBox="0 0 19 18" fill="none" stroke="#fff" strokeWidth="1.400"><path d="M1 18Q2 3 16 1M6 18Q6.500 8 17 6M10.500 18q.5-6 7.500-7.500" /><circle cx="16.500" cy="16" r="1.500" fill="#fff" stroke="none" /></svg>
      </button>
      <button aria-label="通知" className="mr-[31px] ml-[198px]">
        <svg width="14" height="24" viewBox="0 0 14 24" fill="none" stroke="#fff" strokeWidth="1.400"><path d="M0 1h13v18H6l-4 4-2-2" /></svg>
      </button>
      <span className="mr-[6px] h-full w-px bg-[#777]" />
    </footer>
  );
}

/* ---------- floating overlays ---------- */

const tiles = [
  ["#828383", "#868787", "#7a7b7b", "#858685", "#858685", "#808181", "#858686", "#878888", "#898a8a"],
  ["#2c3031", "#2b2e2f", "#1f2424", "#2d3132", "#3b3f40", "#22282a", "#1d2324", "#2a2e2f", "#2c3031"],
  ["#262a2b", "#222627", "#1c2020", "#393d3c", "#45494b", "#3b3e3f", "#444", "#25292b", "#272b2c"],
];

function Mosaic() {
  return (
    <div className="pointer-events-none absolute right-[50px] bottom-0 h-[78px] w-[205px] overflow-hidden rounded-[36px] bg-[#dedede] pt-[6px]">
      {tiles.map((row, i) => (
        <div key={i} className="grid h-6 grid-cols-9">
          {row.map((color, j) => <span key={j} style={{ backgroundColor: color }} />)}
        </div>
      ))}
    </div>
  );
}

function Watermark() {
  return (
    <svg className="pointer-events-none absolute right-[90px] bottom-10 drop-shadow-[0_0_2px_rgba(0,0,0,0.45)]" width="360" height="170" viewBox="1470 870 360 170" fill="#fff" aria-hidden="true">
      <g opacity=".92">
        <text x="1471" y="982" fontSize="77" fontWeight="700" stroke="#fff" strokeWidth="3" className="font-['Liberation_Sans',sans-serif]">Bai</text>
        <ellipse cx="1605" cy="918" rx="13" ry="17" />
        <ellipse cx="1629" cy="893" rx="12.500" ry="17" />
        <ellipse cx="1660" cy="895" rx="13" ry="17" transform="rotate(12 1660 895)" />
        <ellipse cx="1679" cy="925" rx="13" ry="17" />
        <path d="M1641 920q10 0 17 10l20 23q10 13 4 24-8 10-26 7-15-2-30 0-20 3-26-8-5-12 4-21l20-24q7-11 17-11z" />
        <text x="1695" y="977" fontSize="59" fontWeight="700" stroke="#fff" className="font-['Noto_Sans_CJK_SC',sans-serif]">经验</text>
      </g>
      <text x="1611" y="975" fontSize="50" fontWeight="700" fill="#fff" stroke="#cfcfcf" strokeWidth="1.500" className="font-['Liberation_Sans',sans-serif]">du</text>
      <text x="1476" y="1028" fontSize="40" fontWeight="500" opacity=".9" className="font-['Open_Sans',sans-serif]">jingyan.baidu.com</text>
    </svg>
  );
}

function LevelMeter() {
  return (
    <div className="absolute top-[694px] right-0 flex h-[89px] w-[15px] flex-col items-center gap-[2px] rounded-l-[5px] border-2 border-r-0 border-[#3b3f4c] bg-[#595e70] pt-2">
      {Array.from({ length: 17 }, (_, i) => (
        <span key={i} className={i < 7 ? "h-[2px] w-[7px] bg-[#343844]" : i < 10 ? "h-[2px] w-[7px] bg-[#d6c24d]" : i < 14 ? "h-[2px] w-[7px] bg-[#8cd078]" : "h-[2px] w-[7px] bg-[#5ed0ae]"} />
      ))}
    </div>
  );
}

export default function App() {
  return (
    <div className="relative flex h-screen flex-col overflow-hidden bg-[#e6e6e6] font-['Open_Sans','Noto_Sans_CJK_SC',sans-serif] text-lg text-[#262626]">
      <TitleBar />
      <Ribbon />
      <FormulaBar />
      <Sheet />
      <SheetTabs />
      <StatusBar />
      <Taskbar />
      <Mosaic />
      <Watermark />
      <LevelMeter />
    </div>
  );
}
